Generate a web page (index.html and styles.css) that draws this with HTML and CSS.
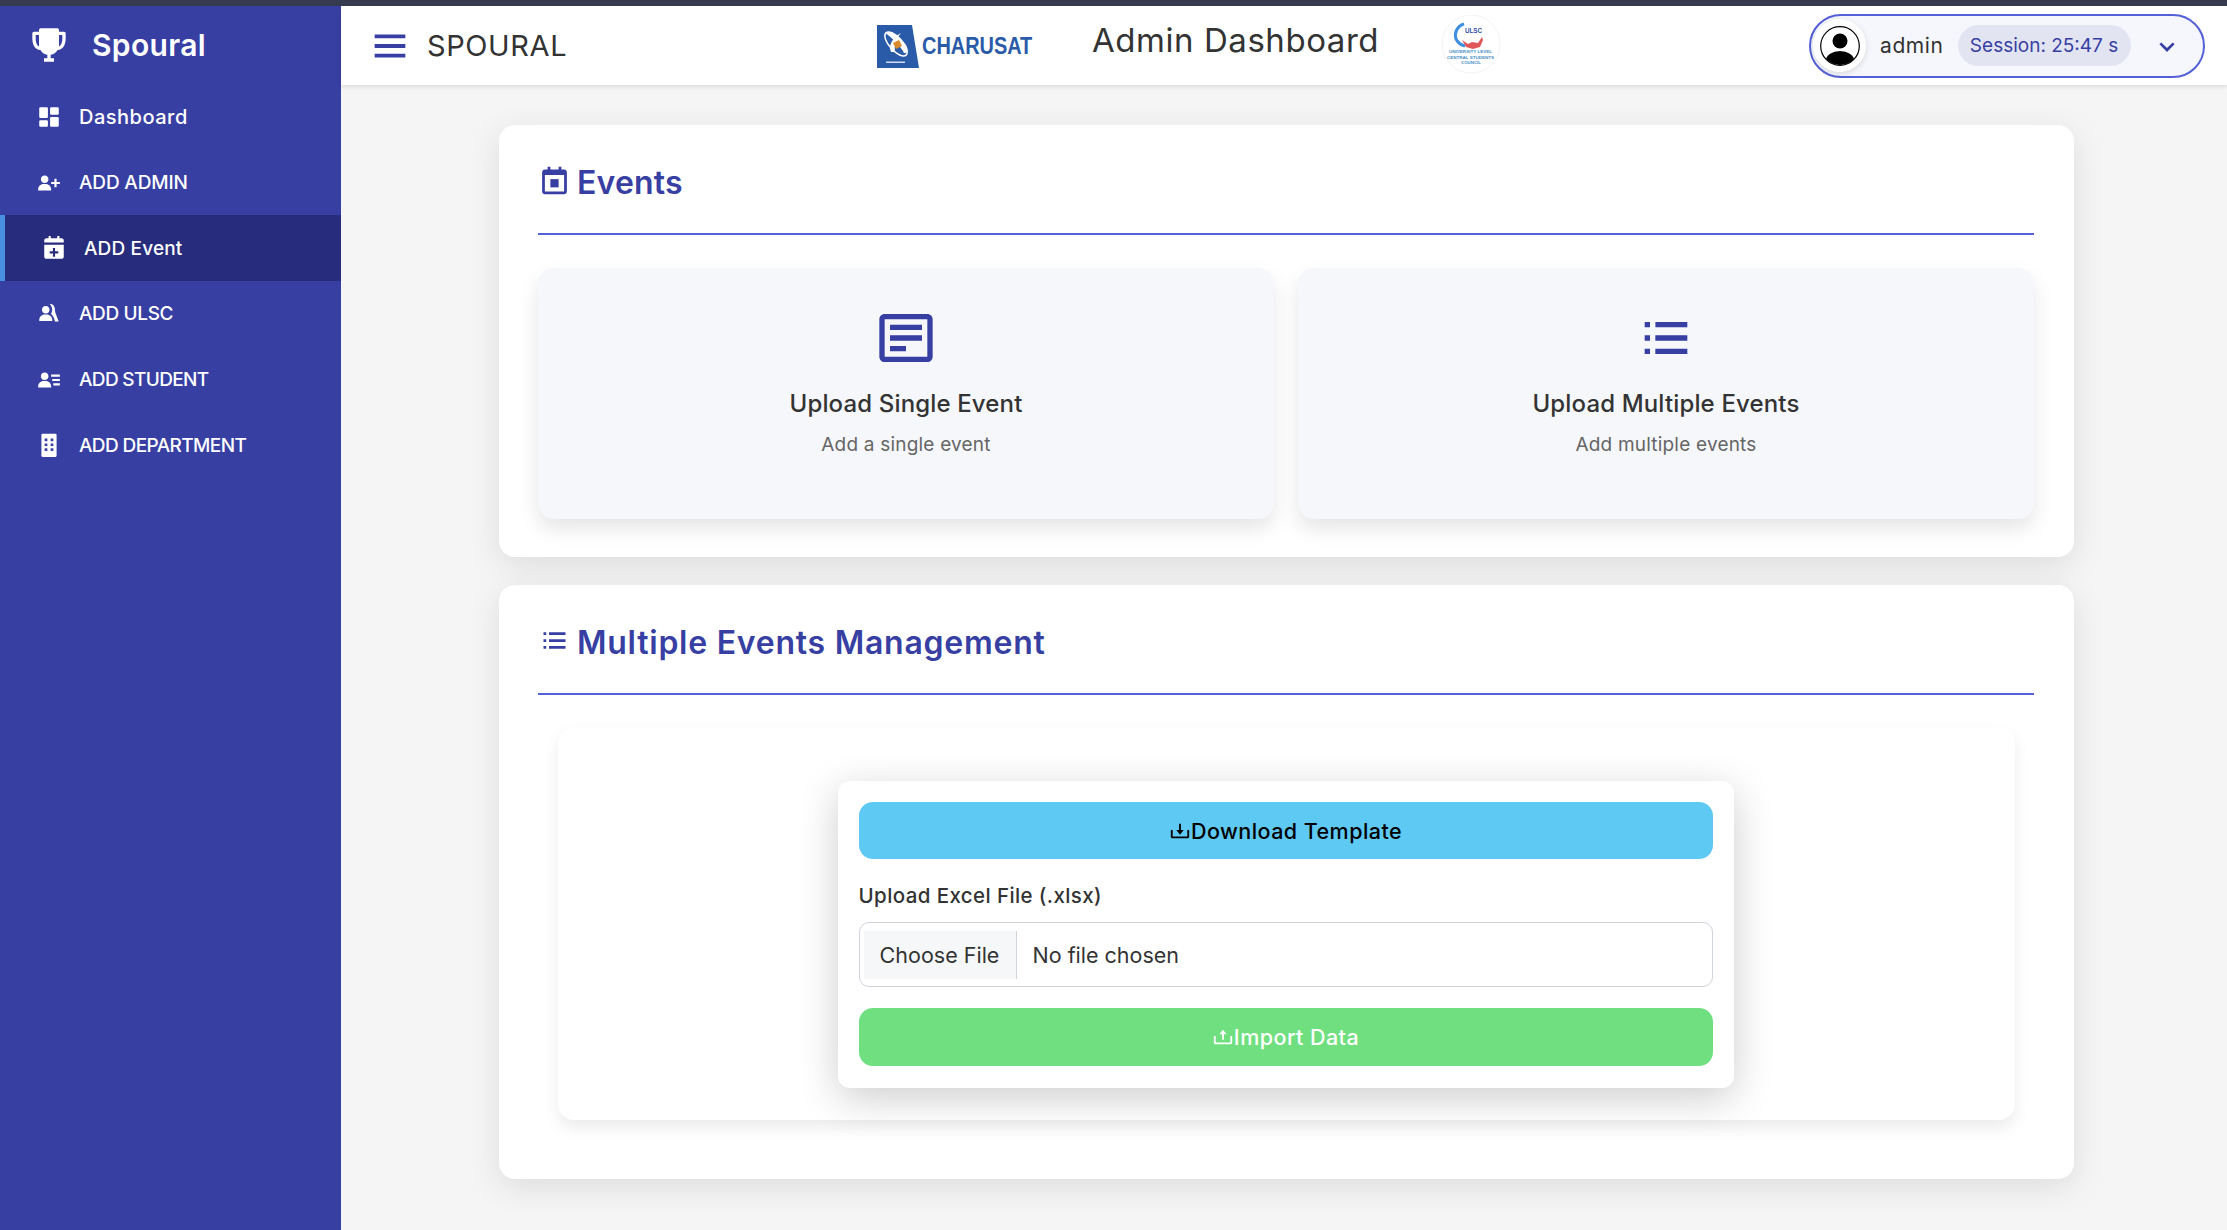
FILE: index.html
```html
<!DOCTYPE html>
<html lang="en">
<head>
<meta charset="utf-8">
<title>Spoural Admin Dashboard</title>
<link rel="stylesheet" href="styles.css">
</head>
<body>
<div class="topstrip"></div>
<div class="app">
  <aside class="sidebar">
    <div class="brand">
      <svg class="brand-icon" viewBox="0 0 24 24"><path d="M21 4h-3V3a1 1 0 0 0-1-1H7a1 1 0 0 0-1 1v1H3a1 1 0 0 0-1 1v3c0 4.31 1.799 6.91 4.819 7.012A6.001 6.001 0 0 0 11 17.91V20H9v2h6v-2h-2v-2.09a6.01 6.01 0 0 0 4.181-2.898C20.201 14.91 22 12.31 22 8V5a1 1 0 0 0-1-1zM4 8V6h2v6.83C4.216 12.078 4 9.299 4 8zm16 0c0 1.299-.216 4.078-2 4.83V6h2v2z"/></svg>
      <span class="brand-name">Spoural</span>
    </div>
    <nav class="nav">
      <a class="nav-item"><svg class="nav-icon" viewBox="0 0 24 24"><path d="M4 13h6a1 1 0 0 0 1-1V4a1 1 0 0 0-1-1H4a1 1 0 0 0-1 1v8a1 1 0 0 0 1 1zm-1 7a1 1 0 0 0 1 1h6a1 1 0 0 0 1-1v-4a1 1 0 0 0-1-1H4a1 1 0 0 0-1 1v4zm10 0a1 1 0 0 0 1 1h6a1 1 0 0 0 1-1v-7a1 1 0 0 0-1-1h-6a1 1 0 0 0-1 1v7zm1-10h6a1 1 0 0 0 1-1V4a1 1 0 0 0-1-1h-6a1 1 0 0 0-1 1v5a1 1 0 0 0 1 1z"/></svg><span class="nav-text nav-dashboard">Dashboard</span></a>
      <a class="nav-item"><svg class="nav-icon" viewBox="0 0 24 24"><path d="M4.5 8.552c0 1.995 1.505 3.5 3.5 3.5s3.5-1.505 3.5-3.5-1.505-3.5-3.5-3.5-3.5 1.505-3.5 3.5zM19 8h-2v3h-3v2h3v3h2v-3h3v-2h-3zM4 19h10v-1c0-2.757-2.243-5-5-5H7c-2.757 0-5 2.243-5 5v1h2z"/></svg><span class="nav-text nav-admin">ADD ADMIN</span></a>
      <a class="nav-item active"><svg class="nav-icon" viewBox="0 0 24 24"><path d="M21 5c0-1.103-.897-2-2-2h-2V1h-2v2H9V1H7v2H5c-1.103 0-2 .897-2 2v2h18V5zM5 22h14c1.103 0 2-.897 2-2V9H3v11c0 1.103.897 2 2 2zm6-10h2v3h3v2h-3v3h-2v-3H8v-2h3v-3z"/></svg><span class="nav-text nav-event">ADD Event</span></a>
      <a class="nav-item"><svg class="nav-icon" viewBox="0 0 24 24"><path d="M4.5 8.552c0 1.995 1.505 3.5 3.5 3.5s3.5-1.505 3.5-3.5-1.505-3.5-3.5-3.5-3.5 1.505-3.5 3.5zM4 19h10v-1c0-2.757-2.243-5-5-5H7c-2.757 0-5 2.243-5 5v1h2z" transform="translate(1 -.5)"/><path d="M12.500 2.600c3.200 0 5 2.600 5 5.600 0 2.800 1.800 5.600 3.500 10.800h-3.500c-.5-3.200-2-5.600-3.600-7.200 1.600-2.300 1.500-6.500-1.400-9.200z"/></svg><span class="nav-text nav-ulsc">ADD ULSC</span></a>
      <a class="nav-item"><svg class="nav-icon" viewBox="0 0 24 24"><path d="M15 11h7v2h-7zm1 4h6v2h-6zm-2-8h8v2h-8zM4 19h10v-1c0-2.757-2.243-5-5-5H7c-2.757 0-5 2.243-5 5v1h2zm4-7c1.995 0 3.5-1.505 3.5-3.5S9.995 5 8 5 4.5 6.505 4.500 8.500 6.005 12 8 12z"/></svg><span class="nav-text nav-student">ADD STUDENT</span></a>
      <a class="nav-item"><svg class="nav-icon" viewBox="0 0 24 24"><path fill-rule="evenodd" d="M18 1.500H6a1 1 0 0 0-1 1v19.500a1 1 0 0 0 1 1h12a1 1 0 0 0 1-1V2.500a1 1 0 0 0-1-1zM8 6h2.500v2.500H8zm5.500 0H16v2.500h-2.500zM8 10.500h2.500V13H8zm5.500 0H16V13h-2.500zM8 15h2.500v2.500H8zm5.500 0H16v2.500h-2.500z"/></svg><span class="nav-text nav-department">ADD DEPARTMENT</span></a>
    </nav>
  </aside>
  <div class="content">
    <header class="header">
      <svg class="menu-icon" viewBox="0 0 24 24"><path d="M4 6h16v2H4zm0 5h16v2H4zm0 5h16v2H4z"/></svg>
      <span class="header-brand">SPOURAL</span>
      <div class="charusat">
        <svg class="charusat-mark" viewBox="0 0 42 43">
          <path d="M0 0H35L42 43H0Z" fill="#2a5ba8"/>
          <path d="M8 8C14 5 22 10 29 20 32 25 30 29 27 28 24 22 16 13 8 8Z" fill="#fff"/>
          <ellipse cx="19" cy="19" rx="6.500" ry="15" transform="rotate(-42 19 19)" fill="none" stroke="#fff" stroke-width="1.500"/>
          <path d="M14 27C11 20 16 12 24 8 19 14 17 21 18 27Z" fill="#fff"/>
          <path d="M16 18l6-3 3 6-6 3z" fill="#d98a2b"/>
          <rect x="9" y="36.500" width="19" height="1.500" fill="#cfdcf0"/>
        </svg>
        <span class="charusat-name">CHARUSAT</span>
      </div>
      <h1 class="header-title">Admin Dashboard</h1>
      <svg class="ulsc" viewBox="0 0 60 60">
        <circle cx="30" cy="29" r="29" fill="#fff" stroke="#f3f3f5"/>
        <path d="M23 9C16 11 13 18 15 24 17 28 20 30 24 31" fill="none" stroke="#3d8fe0" stroke-width="3"/>
        <path d="M21 25l6 4 4-2 6 1 4-6 1 3-3 7-7 2-7-2z" fill="#e0575a"/>
        <text x="24" y="18" class="ulsc-big" textLength="17" lengthAdjust="spacingAndGlyphs">ULSC</text>
        <text x="8" y="38" class="ulsc-small" textLength="43" lengthAdjust="spacingAndGlyphs">UNIVERSITY LEVEL</text>
        <text x="6" y="43.500" class="ulsc-small" textLength="47" lengthAdjust="spacingAndGlyphs">CENTRAL STUDENTS</text>
        <text x="20" y="49" class="ulsc-small" textLength="20" lengthAdjust="spacingAndGlyphs">COUNCIL</text>
      </svg>
      <div class="user-pill">
        <span class="avatar">
          <svg class="avatar-icon" viewBox="0 0 40 40">
            <defs><clipPath id="avatar-clip"><circle cx="20" cy="20" r="19"/></clipPath></defs>
            <g clip-path="url(#avatar-clip)"><circle cx="20" cy="15" r="7.500"/><ellipse cx="20" cy="34" rx="14" ry="9"/></g>
            <circle cx="20" cy="20" r="19.300" fill="none" stroke="#000" stroke-width="1.200"/>
          </svg>
        </span>
        <span class="user-name">admin</span>
        <span class="session">Session: 25:47 s</span>
        <svg class="chevron" viewBox="0 0 24 24"><path d="M16.293 9.293 12 13.586 7.707 9.293l-1.414 1.414L12 16.414l5.707-5.707z"/></svg>
      </div>
    </header>
    <main class="main">
      <section class="card card-events">
        <h2 class="card-title">
          <svg class="title-icon" viewBox="0 0 24 24"><path d="M19 4h-2V2h-2v2H9V2H7v2H5c-1.103 0-2 .897-2 2v14c0 1.103.897 2 2 2h14c1.103 0 2-.897 2-2V6c0-1.103-.897-2-2-2zm.002 16H5V8h14l.002 12z"/><path d="M9 11h6v6H9z"/></svg>
          <span class="title-events">Events</span>
        </h2>
        <div class="option-grid">
          <div class="option">
            <svg class="option-icon" viewBox="0 0 24 24"><path d="M20 3H4c-1.103 0-2 .897-2 2v14c0 1.103.897 2 2 2h16c1.103 0 2-.897 2-2V5c0-1.103-.897-2-2-2zM4 19V5h16l.002 14H4z"/><path d="M6 7h12v2H6zm0 4h12v2H6zm0 4h6v2H6z"/></svg>
            <h3 class="option-title">Upload Single Event</h3>
            <p class="option-sub">Add a single event</p>
          </div>
          <div class="option">
            <svg class="option-icon" viewBox="0 0 24 24"><path d="M4 6h2v2H4zm0 5h2v2H4zm0 5h2v2H4zm16-8V6H8.023v2H18.800zM8 11h12v2H8zm0 5h12v2H8z"/></svg>
            <h3 class="option-title">Upload Multiple Events</h3>
            <p class="option-sub">Add multiple events</p>
          </div>
        </div>
      </section>
      <section class="card card-import">
        <h2 class="card-title">
          <svg class="title-icon" viewBox="0 0 24 24"><path d="M4 6h2v2H4zm0 5h2v2H4zm0 5h2v2H4zm16-8V6H8.023v2H18.800zM8 11h12v2H8zm0 5h12v2H8z"/></svg>
          <span class="title-multi">Multiple Events Management</span>
        </h2>
        <div class="import-panel">
          <div class="import-box">
            <button class="btn btn-download" type="button"><svg class="btn-icon" viewBox="0 0 24 24"><path d="m12 16 4-5h-3V4h-2v7H8z"/><path d="M20 18H4v-7H2v7c0 1.103.897 2 2 2h16c1.103 0 2-.897 2-2v-7h-2v7z"/></svg>Download Template</button>
            <label class="file-label" for="excel">Upload Excel File (.xlsx)</label>
            <input class="file-input" id="excel" type="file" accept=".xlsx">
            <button class="btn btn-import" type="button"><svg class="btn-icon" viewBox="0 0 24 24"><path d="M11 15h2V9h3l-4-5-4 5h3z"/><path d="M20 18H4v-7H2v7c0 1.103.897 2 2 2h16c1.103 0 2-.897 2-2v-7h-2v7z"/></svg>Import Data</button>
          </div>
        </div>
      </section>
    </main>
  </div>
</div>
</body>
</html>
```
FILE: styles.css
```css
* { box-sizing: border-box; }
html, body { margin: 0; height: 100%; overflow: hidden; }
body { font-family: Inter, "Open Sans", sans-serif; background: #f5f5f5; color: #333; }
h1, h2, h3, p { margin: 0; }

.topstrip { height: 6px; background: #373b4f; }
.app { display: flex; height: 1224px; }

/* Sidebar */
.sidebar { width: 341px; flex: none; background: #383fa3; color: #fff; }
.brand { height: 78px; display: flex; align-items: center; padding-left: 29px; gap: 23px; }
.brand-icon { width: 40px; height: 40px; fill: #fff; }
.brand-name { font-size: 30px; font-weight: 600; letter-spacing: .35px; }
.nav { display: flex; flex-direction: column; }
.nav-item { height: 65.7px; display: flex; align-items: center; padding-left: 36px; gap: 17px; }
.nav-item.active { background: #272d7c; border-left: 5px solid #4a90e2; padding-left: 36px; }
.nav-icon { width: 26px; height: 26px; fill: #fff; flex: none; }
.nav-text { font-size: 19px; font-weight: 500; }
.nav-dashboard { font-size: 20px; letter-spacing: .5px; }
.nav-admin { letter-spacing: -.15px; }
.nav-event { letter-spacing: .15px; }
.nav-ulsc { letter-spacing: -.35px; }
.nav-student { letter-spacing: -.65px; }
.nav-department { letter-spacing: -.6px; }

/* Header */
.content { flex: 1; min-width: 0; display: flex; flex-direction: column; }
.header { height: 79px; flex: none; background: #fff; box-shadow: 0 2px 4px rgba(0,0,0,.1); display: flex; align-items: center; padding: 0 22px 0 26px; position: relative; }
.menu-icon { width: 46px; height: 46px; fill: #383fa3; flex: none; }
.header-brand { font-size: 29px; font-weight: 400; letter-spacing: .6px; margin-left: 14px; width: 140px; white-space: nowrap; color: #333; }
.charusat { display: flex; align-items: center; gap: 3px; margin-left: 310px; width: 155px; height: 43px; margin-top: 1px; }
.charusat-mark { width: 42px; height: 43px; flex: none; }
.charusat-name { font-family: "Liberation Sans", sans-serif; font-weight: 700; font-size: 24px; color: #2a5ba8; transform: scaleX(.83); transform-origin: left center; white-space: nowrap; }
.header-title { font-size: 33px; font-weight: 400; letter-spacing: .55px; margin-left: 60px; width: 288px; white-space: nowrap; margin-bottom: 12px; color: #333; }
.ulsc { width: 60px; height: 60px; margin-left: 61px; flex: none; margin-top: -2px; }
.ulsc-big { font-family: "Liberation Sans", sans-serif; font-size: 8px; font-weight: 700; fill: #2f4fa8; }
.ulsc-small { font-family: "Liberation Sans", sans-serif; font-size: 4px; font-weight: 700; fill: #4a8fc8; }
.user-pill { margin-left: auto; width: 396px; height: 64px; border: 2px solid #5560d8; border-radius: 32px; background: #f5f7fc; display: flex; align-items: center; padding-left: 2px; }
.avatar { width: 53px; height: 53px; border-radius: 50%; background: #fff; box-shadow: 0 2px 6px rgba(0,0,0,.12); display: flex; align-items: center; justify-content: center; flex: none; }
.avatar-icon { width: 40px; height: 40px; }
.user-name { font-size: 21px; letter-spacing: .6px; margin-left: 14px; color: #333; }
.session { margin-left: 14px; height: 41px; width: 173px; border-radius: 21px; background: #e2e4f2; color: #383fa3; font-size: 19px; display: flex; align-items: center; justify-content: center; white-space: nowrap; }
.chevron { width: 32px; height: 32px; fill: #383fa3; margin-left: 20px; flex: none; }

/* Main */
.main { flex: 1; padding: 40px 153px 0 158px; display: flex; flex-direction: column; gap: 28px; }
.card { background: #fff; border-radius: 16px; box-shadow: 0 8px 32px rgba(0,0,0,.1); padding: 40px 40px 0; }
.card-events { height: 432px; }
.card-import { height: 594px; }
.card-title { height: 70px; padding-bottom: 32px; border-bottom: 2px solid #5560d8; display: flex; align-items: center; gap: 6px; color: #383fa3; font-size: 32px; font-weight: 600; margin: 0 0 0 -1px; line-height: 36px; }
.title-icon { width: 33px; height: 33px; fill: #383fa3; flex: none; margin-top: -6px; }
.title-events { letter-spacing: .2px; }
.title-multi { letter-spacing: .75px; margin-top: -1px; }

.option-grid { display: grid; grid-template-columns: 1fr 1fr; gap: 24px; margin: 33px 0 0 -1px; }
.option { height: 251px; border-radius: 16px; background: #f5f7fb; box-shadow: 0 10px 20px rgba(0,0,0,.1); display: flex; flex-direction: column; align-items: center; padding-top: 38px; }
.option-icon { width: 64px; height: 64px; fill: #383fa3; flex: none; }
.option-title { font-size: 24px; font-weight: 500; letter-spacing: .15px; line-height: 34px; margin-top: 17px; color: #333; }
.option-sub { font-size: 19px; letter-spacing: .2px; line-height: 28px; margin-top: 10px; color: #666; }

/* Import */
.import-panel { margin: 32px 19px 0 19px; height: 393px; background: #fff; border-radius: 16px; box-shadow: 0 8px 16px rgba(0,0,0,.08); padding: 54px 2px 0 0; }
.import-box { width: 896px; height: 307px; margin: 0 auto; background: #fff; border-radius: 12px; box-shadow: 0 10px 40px rgba(0,0,0,.2); padding: 21px; }
.btn { display: flex; align-items: center; justify-content: center; width: 100%; height: 57px; border: 0; border-radius: 14px; font-family: inherit; font-size: 21.500px; font-weight: 500; letter-spacing: .45px; padding: 0; }
.btn-icon { width: 22px; height: 22px; fill: currentColor; flex: none; }
.btn-download { background: #5ec9f2; color: #000; }
.btn-import { background: #6fdf7f; color: #fff; margin-top: 21px; height: 58px; }
.file-label { display: block; font-size: 20.500px; font-weight: 500; letter-spacing: .4px; line-height: 30px; margin-top: 22px; color: #333; }
.file-input { display: block; width: 100%; height: 65px; margin-top: 11px; border: 1.500px solid #ced4da; border-radius: 10px; background: #fff; padding: 7.500px 4px; font-family: inherit; font-size: 21.500px; color: #333; }
.file-input::file-selector-button { height: 48px; width: 153px; margin: 0 16px 0 0; padding: 0; border: 0; border-right: 1.500px solid #ced4da; background: #f6f7f9; font: inherit; color: #333; }
```
